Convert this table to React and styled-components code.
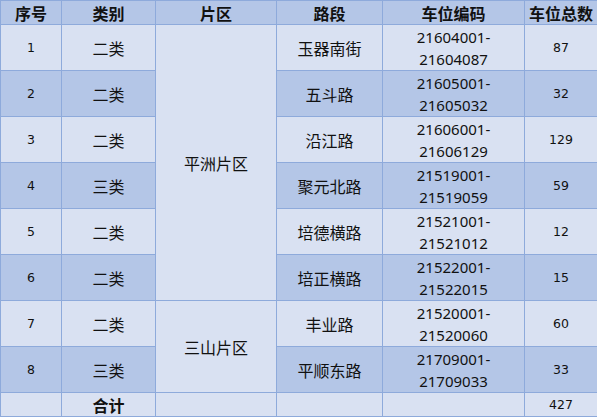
import React from 'react';
import styled, { createGlobalStyle } from 'styled-components';

const GlobalStyle = createGlobalStyle`
  html, body {
    margin: 0;
    padding: 0;
    background: #ffffff;
  }
`;

const rows = [
  { no: 1, type: '二类', road: '玉器南街', from: '21604001', to: '21604087', count: 87 },
  { no: 2, type: '二类', road: '五斗路', from: '21605001', to: '21605032', count: 32 },
  { no: 3, type: '二类', road: '沿江路', from: '21606001', to: '21606129', count: 129 },
  { no: 4, type: '三类', road: '聚元北路', from: '21519001', to: '21519059', count: 59 },
  { no: 5, type: '二类', road: '培德横路', from: '21521001', to: '21521012', count: 12 },
  { no: 6, type: '二类', road: '培正横路', from: '21522001', to: '21522015', count: 15 },
  { no: 7, type: '二类', road: '丰业路', from: '21520001', to: '21520060', count: 60 },
  { no: 8, type: '三类', road: '平顺东路', from: '21709001', to: '21709033', count: 33 },
];

const areas = { 0: { name: '平洲片区', span: 6 }, 6: { name: '三山片区', span: 2 } };

const Table = styled.table`
  width: 597px;
  border-collapse: collapse;
  table-layout: fixed;
  border: 1px solid #5b8bd6;
  font-family: "Noto Sans CJK SC", "Noto Sans", sans-serif;
  color: #111;
`;

const Col = styled.col`
  width: ${(p) => p.$w}px;
`;

const Head = styled.th`
  height: 23px;
  padding: 0;
  background: #b4c6e7;
  border: 1px solid #8eaadb;
  font-size: 16px;
  font-weight: bold;
  line-height: 22px;
  text-align: center;
`;

const Row = styled.tr`
  background: ${(p) => (p.$dark ? '#b4c6e7' : '#d9e1f2')};
`;

const Cell = styled.td`
  height: 45px;
  padding: 0;
  border: 1px solid #8eaadb;
  text-align: center;
  vertical-align: middle;
  font-size: 16px;
  line-height: 22px;
`;

const NumCell = styled(Cell)`
  font-family: "DejaVu Sans", "Liberation Sans", sans-serif;
  font-size: 12.5px;
`;

const CodeCell = styled(Cell)`
  font-family: "Noto Sans", "Liberation Sans", sans-serif;
  font-size: 15px;
  line-height: 22px;
`;

const AreaCell = styled(Cell)`
  background: #d9e1f2;
`;

const TotalCell = styled(Cell)`
  height: 23px;
  line-height: 20px;
  font-weight: ${(p) => (p.$bold ? 'bold' : 'normal')};
`;

const TotalNum = styled(TotalCell)`
  font-family: "DejaVu Sans", "Liberation Sans", sans-serif;
  font-size: 12.5px;
`;

export default function App() {
  const total = rows.reduce((s, r) => s + r.count, 0);
  return (
    <>
      <GlobalStyle />
      <Table>
        <colgroup>
          <Col $w={61} />
          <Col $w={94} />
          <Col $w={121} />
          <Col $w={106} />
          <Col $w={142} />
          <Col $w={73} />
        </colgroup>
        <thead>
          <tr>
            <Head>序号</Head>
            <Head>类别</Head>
            <Head>片区</Head>
            <Head>路段</Head>
            <Head>车位编码</Head>
            <Head>车位总数</Head>
          </tr>
        </thead>
        <tbody>
          {rows.map((r, i) => (
            <Row key={r.no} $dark={i % 2 === 1}>
              <NumCell>{r.no}</NumCell>
              <Cell>{r.type}</Cell>
              {areas[i] && <AreaCell rowSpan={areas[i].span}>{areas[i].name}</AreaCell>}
              <Cell>{r.road}</Cell>
              <CodeCell>
                {r.from}-
                <br />
                {r.to}
              </CodeCell>
              <NumCell>{r.count}</NumCell>
            </Row>
          ))}
          <Row>
            <TotalCell />
            <TotalCell $bold>合计</TotalCell>
            <TotalCell />
            <TotalCell />
            <TotalCell />
            <TotalNum>{total}</TotalNum>
          </Row>
        </tbody>
      </Table>
    </>
  );
}
